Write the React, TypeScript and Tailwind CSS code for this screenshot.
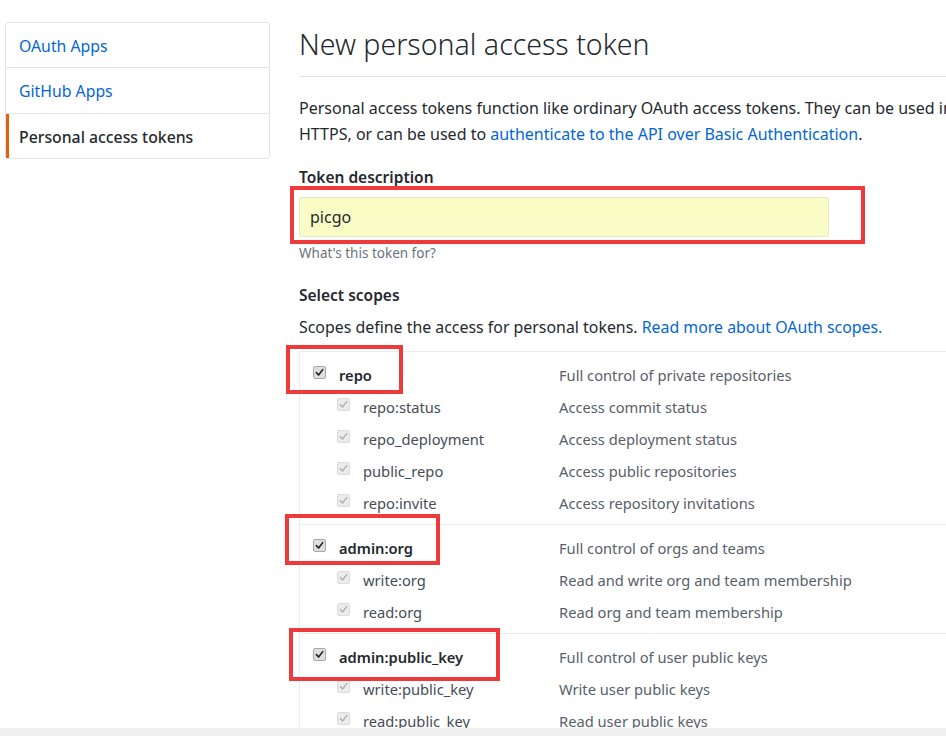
import React from "react";

const groups = [
  {
    name: "repo",
    desc: "Full control of private repositories",
    box: "top-[-7px] left-[-14px] w-[117px] h-[49px]",
    subs: [
      ["repo:status", "Access commit status"],
      ["repo_deployment", "Access deployment status"],
      ["public_repo", "Access public repositories"],
      ["repo:invite", "Access repository invitations"],
    ],
  },
  {
    name: "admin:org",
    desc: "Full control of orgs and teams",
    box: "top-[-11px] left-[-15px] w-[155px] h-[51px]",
    subs: [
      ["write:org", "Read and write org and team membership"],
      ["read:org", "Read org and team membership"],
    ],
  },
  {
    name: "admin:public_key",
    desc: "Full control of user public keys",
    box: "top-[-6px] left-[-11px] w-[211px] h-[53px]",
    subs: [
      ["write:public_key", "Write user public keys"],
      ["read:public_key", "Read user public keys"],
    ],
  },
];

function Check({ disabled }: { disabled?: boolean }) {
  return (
    <span
      className={`w-[13px] h-[13px] rounded-[2px] border flex items-center justify-center shrink-0 -mt-[4px] ${
        disabled ? "border-[#dcdcdc] bg-[#ececec]" : "border-[#a9a9a9] bg-[#dedede]"
      }`}
    >
      <svg width="9" height="9" viewBox="0 0 10 10">
        <path
          d="M1.5 5.2 L4 7.8 L8.6 1.8"
          fill="none"
          stroke={disabled ? "#b5b5b5" : "#222"}
          strokeWidth="1.8"
          strokeLinecap="round"
          strokeLinejoin="round"
        />
      </svg>
    </span>
  );
}

export default function App() {
  return (
    <div
      className="w-[946px] h-[736px] overflow-hidden bg-white relative flex text-[#24292e]"
      style={{ fontFamily: '"Noto Sans", "Open Sans", sans-serif' }}
    >
      <nav className="ml-[5px] mt-[22px] w-[265px] h-[137px] border border-[#e1e4e8] rounded-[3px] shrink-0 text-[15.8px]">
        <div className="h-[45px] flex items-center pt-[4px] pl-[13px] text-[#0366d6] border-b border-[#e1e4e8]">OAuth Apps</div>
        <div className="h-[46px] flex items-center pt-[3px] pl-[13px] text-[#0366d6] border-b border-[#e1e4e8]">GitHub Apps</div>
        <div className="h-[44px] flex items-center pt-[3px] pl-[10px] border-l-[3px] border-[#e36209] font-medium">
          Personal access tokens
        </div>
      </nav>

      <main className="ml-[29px] w-[760px] shrink-0">
        <h1 className="mt-[27px] text-[28.5px] leading-[35px] font-light pb-[14px] border-b border-[#e1e4e8]">
          New personal access token
        </h1>
        <p className="mt-[18px] text-[16px] leading-[26px] whitespace-nowrap">
          Personal access tokens function like ordinary OAuth access tokens. They can be used in place of a password for Git over
          <br />
          HTTPS, or can be used to <span className="text-[#0366d6]">authenticate to the API over Basic Authentication</span>.
        </p>

        <div className="mt-[18px] text-[15.5px] leading-[24px] font-semibold">Token description</div>
        <div className="relative mt-[8px] w-[530px]">
          <div className="h-[40px] bg-[#fafcc5] border border-[#e6e8c8] rounded-[3px] flex items-center pl-[10px] text-[16px]">
            picgo
          </div>
          <div className="absolute top-[-11px] left-[-9px] w-[575px] h-[58px] border-[4px] border-[#ee3a3a]" />
        </div>
        <div className="mt-[7px] text-[13.5px] leading-[18px] text-[#6a737d]">What's this token for?</div>

        <div className="mt-[21px] text-[15.5px] leading-[24px] font-semibold">Select scopes</div>
        <p className="mt-[8px] text-[15.9px] leading-[24px]">
          Scopes define the access for personal tokens. <span className="text-[#0366d6]">Read more about OAuth scopes.</span>
        </p>

        <div className="mt-[12px] border-l border-[#eaecef]">
          {groups.map((g) => (
            <div key={g.name} className="relative pt-[7px] pb-[5px] border-t border-[#eaecef]">
              <div className="h-[32px] flex items-center text-[14.7px]">
                <div className="w-[259px] flex items-center pl-[13px] gap-[13px] font-semibold">
                  <Check />
                  <span>{g.name}</span>
                </div>
                <span className="text-[#586069]">{g.desc}</span>
              </div>
              {g.subs.map(([n, d]) => (
                <div key={n} className="h-[32px] flex items-center text-[14.7px]">
                  <div className="w-[259px] flex items-center pl-[37px] gap-[13px] text-[#444d56]">
                    <Check disabled />
                    <span>{n}</span>
                  </div>
                  <span className="text-[#586069]">{d}</span>
                </div>
              ))}
              <div className={`absolute border-[4px] border-[#ee3a3a] ${g.box}`} />
            </div>
          ))}
        </div>
      </main>

      <div className="absolute left-0 right-0 bottom-0 h-[8px] bg-[#f0f0f0]" />
    </div>
  );
}
